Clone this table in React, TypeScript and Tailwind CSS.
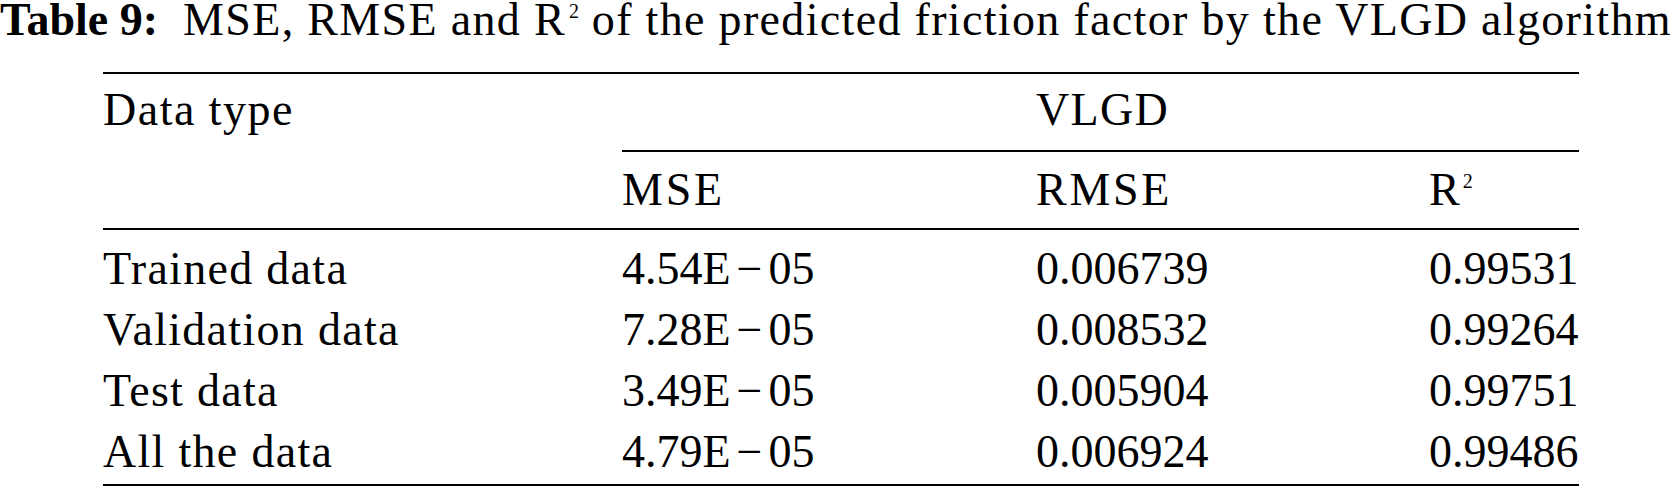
const rows = [
  { name: "Trained data", mse: ["4.54", "05"], rmse: "0.006739", r2: "0.99531" },
  { name: "Validation data", mse: ["7.28", "05"], rmse: "0.008532", r2: "0.99264" },
  { name: "Test data", mse: ["3.49", "05"], rmse: "0.005904", r2: "0.99751" },
  { name: "All the data", mse: ["4.79", "05"], rmse: "0.006924", r2: "0.99486" },
];

function Sq() {
  return <span className="relative -top-[17px] text-[20px] leading-none ml-[3px] tracking-normal">2</span>;
}

export default function App() {
  return (
    <div className="w-[1672px] h-[491px] bg-white text-black font-['Liberation_Serif',serif] text-[46px] overflow-hidden">
      <div className="h-[40px] leading-[40px] whitespace-nowrap tracking-[1.33px]">
        <span className="font-bold tracking-normal">Table 9:</span>
        <span className="ml-[25px]">
          MSE, RMSE and R<Sq /> of the predicted friction factor by the VLGD algorithm
        </span>
      </div>

      <div className="ml-[103px] mt-[32px] w-[1476px]">
        <div className="h-[2px] bg-black" />
        <div className="grid grid-cols-[519px_414px_393px_150px]">
          <div className="h-[59px] pt-[13px] leading-[46px] tracking-[1.5px]">Data type</div>
          <div />
          <div className="col-span-2 h-[59px] pt-[13px] leading-[46px] tracking-[1.3px]">VLGD</div>
          <div />
          <div className="col-span-3 mt-[17px] h-[2px] bg-black" />
          <div />
          <div className="h-[61px] pt-[15px] leading-[46px] tracking-[2.8px]">MSE</div>
          <div className="h-[61px] pt-[15px] leading-[46px] tracking-[2.7px]">RMSE</div>
          <div className="h-[61px] pt-[15px] leading-[46px]">
            R<Sq />
          </div>
        </div>
        <div className="mt-[15px] h-[2px] bg-black" />
        <div className="pt-[8px] pb-[2px]">
          {rows.map((r) => (
            <div key={r.name} className="grid grid-cols-[519px_414px_393px_150px] h-[61px] leading-[61px] whitespace-nowrap">
              <div className="tracking-[1.3px]">{r.name}</div>
              <div>
                {r.mse[0]}E<span className="mx-[6px]">{"\u2212"}</span>{r.mse[1]}
              </div>
              <div>{r.rmse}</div>
              <div>{r.r2}</div>
            </div>
          ))}
        </div>
        <div className="h-[2px] bg-black" />
      </div>
    </div>
  );
}
